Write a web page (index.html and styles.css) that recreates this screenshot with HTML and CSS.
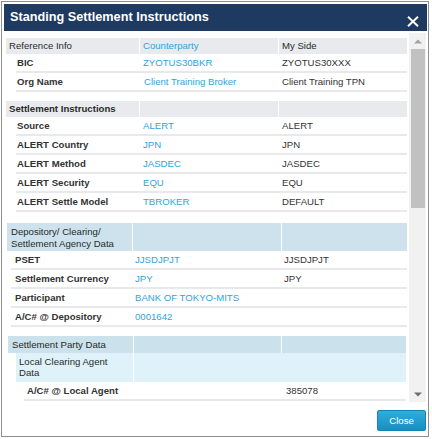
FILE: index.html
```html
<!DOCTYPE html>
<html>
<head>
<meta charset="utf-8">
<link rel="stylesheet" href="styles.css">
</head>
<body>
<div class="dialog">
  <div class="titlebar">
    <span class="title">Standing Settlement Instructions</span>
    <svg class="close-x" width="12" height="11" viewBox="0 0 12 11"><path d="M1 0.8 L11 10.2 M11 0.8 L1 10.2" stroke="#fff" stroke-width="2" fill="none"/></svg>
  </div>
  <div class="body">
    <div class="scroll">
      <div class="group ga">
        <div class="hdr-a gray">
          <div class="cell">Reference Info</div>
          <div class="cell blue">Counterparty</div>
          <div class="cell">My Side</div>
        </div>
        <div class="row-a"><div class="lbl">BIC</div><div class="v2 blue">ZYOTUS30BKR</div><div class="v3">ZYOTUS30XXX</div></div>
        <div class="row-a"><div class="lbl">Org Name</div><div class="v2 blue wide">Client Training Broker</div><div class="v3">Client Training TPN</div></div>
      </div>
      <div class="group gb">
        <div class="hdr-a gray">
          <div class="cell bold">Settlement Instructions</div>
          <div class="cell"></div>
          <div class="cell"></div>
        </div>
        <div class="row-a"><div class="lbl">Source</div><div class="v2 blue">ALERT</div><div class="v3">ALERT</div></div>
        <div class="row-a"><div class="lbl">ALERT Country</div><div class="v2 blue">JPN</div><div class="v3">JPN</div></div>
        <div class="row-a"><div class="lbl">ALERT Method</div><div class="v2 blue">JASDEC</div><div class="v3">JASDEC</div></div>
        <div class="row-a"><div class="lbl">ALERT Security</div><div class="v2 blue">EQU</div><div class="v3">EQU</div></div>
        <div class="row-a"><div class="lbl">ALERT Settle Model</div><div class="v2 blue">TBROKER</div><div class="v3">DEFAULT</div></div>
      </div>
      <div class="group gc">
        <div class="hdr-b">
          <div class="cell">Depository/ Clearing/<br>Settlement Agency Data</div>
          <div class="cell"></div>
          <div class="cell"></div>
        </div>
        <div class="row-b"><div class="lbl">PSET</div><div class="v2 blue">JJSDJPJT</div><div class="v3">JJSDJPJT</div></div>
        <div class="row-b"><div class="lbl">Settlement Currency</div><div class="v2 blue">JPY</div><div class="v3">JPY</div></div>
        <div class="row-b"><div class="lbl">Participant</div><div class="v2 blue">BANK OF TOKYO-MITS</div><div class="v3"></div></div>
        <div class="row-b"><div class="lbl">A/C# @ Depository</div><div class="v2 blue">0001642</div><div class="v3"></div></div>
      </div>
      <div class="group gd">
        <div class="hdr-c">
          <div class="cell">Settlement Party Data</div>
          <div class="cell"></div>
          <div class="cell"></div>
        </div>
        <div class="sub-c">
          <div class="cell">Local Clearing Agent<br>Data</div>
          <div class="cell"></div>
        </div>
        <div class="row-c"><div class="lbl">A/C# @ Local Agent</div><div class="v2"></div><div class="v3">385078</div></div>
      </div>
    </div>
    <div class="scrollbar">
      <div class="sb-btn"><svg width="8" height="5" viewBox="0 0 8 5"><path d="M0 4.5 L4 0.5 L8 4.5 Z" fill="#a3a3a3"/></svg></div>
      <div class="sb-track"><div class="sb-thumb"></div></div>
      <div class="sb-btn"><svg width="8" height="5" viewBox="0 0 8 5"><path d="M0 0.5 L4 4.5 L8 0.5 Z" fill="#6f6f6f"/></svg></div>
    </div>
  </div>
  <div class="footer">
    <button class="btn-close">Close</button>
  </div>
</div>
</body>
</html>
```
FILE: styles.css
```css
html, body {
  margin: 0;
  padding: 0;
  background: #ffffff;
}
body {
  font-family: "Liberation Sans", Arial, sans-serif;
  font-size: 9.6px;
  color: #333333;
}
.dialog {
  margin: 1px 0 0 1px;
  width: 428px;
  height: 436px;
  box-sizing: border-box;
  border: 1px solid #8e8e8e;
  padding: 2px 1px 0 2px;
  background: #ffffff;
  display: flex;
  flex-direction: column;
}
.titlebar {
  width: 423px;
  height: 27px;
  background: #1f3a60;
  display: flex;
  align-items: flex-start;
  justify-content: space-between;
  flex: none;
}
.title {
  color: #ffffff;
  font-weight: bold;
  font-size: 12.7px;
  margin: 6px 0 0 6px;
  line-height: 15px;
}
.close-x {
  margin: 12px 8px 0 0;
}
.body {
  margin-top: 2px;
  width: 423px;
  height: 369px;
  display: flex;
  flex: none;
}
.scroll {
  width: 404px;
  box-sizing: border-box;
  padding: 5px 1px 0 2px;
  overflow: hidden;
}
.scrollbar {
  width: 17px;
  margin-right: 1px;
  margin-left: 1px;
  background: #f1f1f1;
  display: flex;
  flex-direction: column;
}
.sb-btn {
  height: 16px;
  display: flex;
  align-items: center;
  justify-content: center;
  flex: none;
}
.sb-track {
  flex: 1;
  padding: 0 1px 0 2px;
}
.sb-thumb {
  height: 159px;
  background: #c1c1c1;
}
.footer {
  display: flex;
  justify-content: flex-end;
  padding: 8px 1px 0 0;
}
.btn-close {
  width: 49px;
  height: 21px;
  border: 1px solid #1585b4;
  border-radius: 2px;
  background: linear-gradient(#2eaddb, #168fc2);
  color: #ffffff;
  font-family: "Liberation Sans", Arial, sans-serif;
  font-size: 9.6px;
  padding: 0;
}

.blue { color: #2ea5dc; }
.bold { font-weight: bold; }

.gb { margin-top: 9px; }
.gc { margin-top: 11px; }
.gd { margin-top: 9px; }

/* upper groups */
.hdr-a {
  display: grid;
  grid-template-columns: 133px 138px 128px;
  column-gap: 1px;
  height: 16px;
}
.hdr-a .cell {
  background: #e8eaed;
  padding-left: 3px;
  line-height: 16px;
  white-space: nowrap;
  color: #2a2a2a;
}
.hdr-a .cell.blue { color: #2ea5dc; }
.row-a {
  margin-left: 10px;
  display: grid;
  grid-template-columns: 124px 139px 128px;
  height: 19px;
  box-sizing: border-box;
  border-bottom: 2px solid #e7e9ec;
  line-height: 17px;
  white-space: nowrap;
}
.row-a .lbl { font-weight: bold; padding-left: 1px; color: #333; }
.row-a .v2 { padding-left: 3px; }
.row-a .v2.wide { padding-left: 4px; }
.row-a .v3 { padding-left: 3px; color: #333; }

/* depository group */
.hdr-b {
  margin-left: 1px;
  display: grid;
  grid-template-columns: 125px 148px 125px;
  column-gap: 1px;
  height: 28px;
}
.hdr-b .cell {
  background: #cde2ec;
  padding: 3px 0 0 4px;
  line-height: 11.5px;
  color: #2a2a2a;
}
.row-b {
  margin-left: 5px;
  display: grid;
  grid-template-columns: 122px 149px 125px;
  height: 19px;
  box-sizing: border-box;
  border-bottom: 2px solid #e7e9ec;
  line-height: 17px;
  white-space: nowrap;
}
.row-b .lbl { padding-left: 4px; color: #333; font-weight: bold; }
.row-b .v2 { padding-left: 2px; }
.row-b .v3 { padding-left: 2px; color: #333; }

/* settlement party group */
.hdr-c {
  margin-left: 2px;
  display: grid;
  grid-template-columns: 125px 147px 124px;
  column-gap: 1px;
  height: 17px;
}
.hdr-c .cell {
  background: #cbe1eb;
  padding-left: 4px;
  line-height: 17px;
  color: #2a2a2a;
}
.sub-c {
  margin-left: 10px;
  display: grid;
  grid-template-columns: 117px 272px;
  column-gap: 1px;
  height: 29px;
}
.sub-c .cell {
  background: #dff2f9;
  padding: 3px 0 0 3px;
  line-height: 11px;
  color: #2a2a2a;
}
.row-c {
  margin-left: 18px;
  width: 382px;
  display: grid;
  grid-template-columns: 109px 149px 124px;
  height: 19px;
  box-sizing: border-box;
  border-bottom: 2px solid #e7e9ec;
  line-height: 17px;
  white-space: nowrap;
}
.row-c .lbl { font-weight: bold; padding-left: 3px; color: #333; }
.row-c .v3 { padding-left: 4px; color: #333; }
```
